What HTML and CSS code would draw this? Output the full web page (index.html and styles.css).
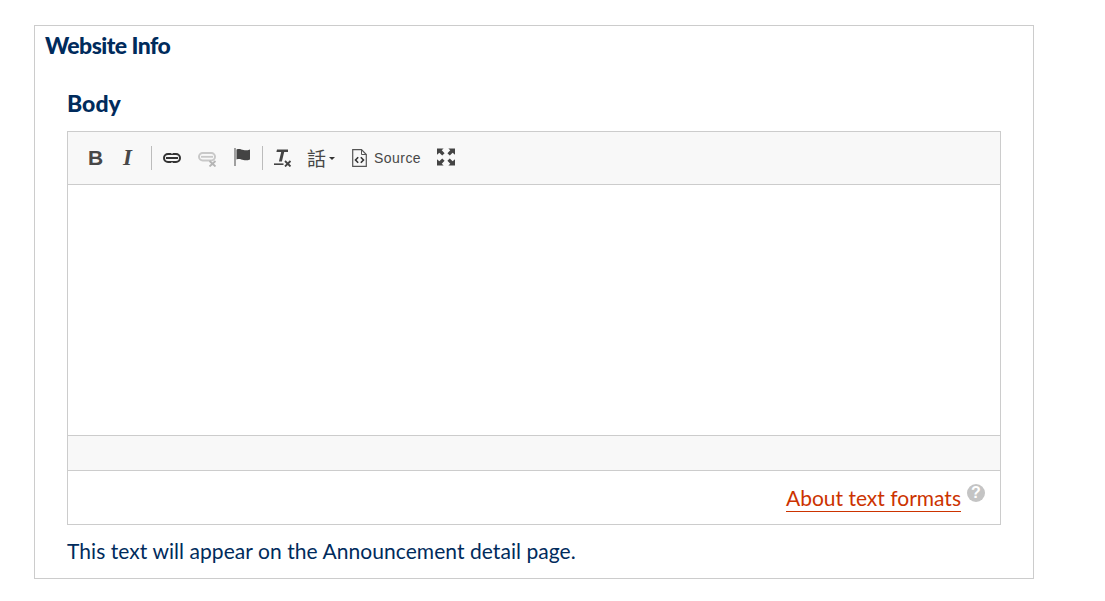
FILE: index.html
```html
<!DOCTYPE html>
<html lang="en">
<head>
  <meta charset="UTF-8">
  <title>Website Info</title>
  <link rel="stylesheet" href="styles.css">
</head>
<body>
  <fieldset class="group">
    <h2 class="group-title">Website Info</h2>

    <div class="field">
      <h3 class="field-label">Body</h3>

      <div class="editor">
        <div class="toolbar">
          <span class="tool tool-bold">B</span>
          <span class="tool tool-italic">I</span>
          <span class="sep"></span>

          <svg class="icon icon-link" width="18" height="10" viewBox="0 0 18 10">
            <rect x="1" y="1" width="16" height="8" rx="4" fill="none" stroke="#333" stroke-width="2"/>
            <path d="M3 5h12" stroke="#333" stroke-width="2"/>
            <path d="M9 0v1M9 9v1" stroke="#f8f8f8" stroke-width="1"/>
          </svg>
          <svg class="icon icon-unlink" width="19" height="15" viewBox="0 0 19 15">
            <rect x="1" y="1" width="16" height="7.500" rx="3.700" fill="none" stroke="#c8c8c8" stroke-width="2"/>
            <path d="M3 4.800h12" stroke="#c8c8c8" stroke-width="1.800"/>
            <path d="M11.500 9l6 5.500M17.500 9l-6 5.500" stroke="#b5b5b5" stroke-width="1.800"/>
          </svg>
          <svg class="icon icon-flag" width="18" height="18" viewBox="0 0 18 18">
            <path d="M1 0v18" stroke="#666" stroke-width="1.200"/>
            <path d="M2.500 1.500c3-1.200 4.500 0 7 .6 2.300.5 4 .3 6.500-.6v10c-2.500.9-4.200 1.100-6.500.6-2.500-.6-4-1.800-7-.6z" fill="#444"/>
          </svg>
          <span class="sep sep-second"></span>

          <svg class="icon icon-clear" width="18" height="19" viewBox="0 0 18 19">
            <path d="M3 1.500h11v2.600h-3.800l-2.300 9.400h-3l2.300-9.400h-4.800z" fill="#444"/>
            <path d="M0 16.200h9.500" stroke="#444" stroke-width="1.600"/>
            <path d="M11 13l5.500 5.500M16.500 13l-5.500 5.500" stroke="#444" stroke-width="1.800"/>
          </svg>
          <span class="tool tool-lang">話</span>
          <span class="caret"></span>
          <svg class="icon icon-source" width="15" height="18" viewBox="0 0 15 18">
            <path d="M.7 .7h8.800l4.800 4.800v11.800h-13.600z" fill="none" stroke="#555" stroke-width="1.200"/>
            <path d="M9.500 .7v4.800h4.800" fill="none" stroke="#555" stroke-width="1"/>
            <path d="M6.200 8.200l-2.700 2.800 2.700 2.800M8.800 8.200l2.700 2.800-2.700 2.800" fill="none" stroke="#333" stroke-width="1.600"/>
          </svg>
          <span class="tool-text">Source</span>
          <svg class="icon icon-max" width="18" height="18" viewBox="0 0 19 18">
            <path d="M0 0h7l-2 2 3 3-2.500 2.500-3-3-2.500 2zM19 0h-7l2 2-3 3 2.500 2.500 3-3 2.500 2zM0 18h7l-2-2 3-3-2.500-2.500-3 3-2.500-2zM19 18h-7l2-2-3-3 2.500-2.500 3 3 2.500-2z" fill="#444"/>
          </svg>
        </div>

        <div class="editor-body"></div>
        <div class="editor-bottom"></div>

        <div class="format-row">
          <a class="format-link" href="#">About text formats</a>
          <span class="help">?</span>
        </div>
      </div>

      <p class="description">This text will appear on the Announcement detail page.</p>
    </div>
  </fieldset>
</body>
</html>
```

FILE: styles.css
```css
* {
  box-sizing: border-box;
}

body {
  margin: 0;
  padding: 25px 71px 0 34px;
  background-color: white;
  font-family: "Lato", "Liberation Sans", sans-serif;
  color: #002b5c;
}

.group {
  margin: 0;
  padding: 0;
  min-width: 0;
  height: 554px;
  border: 1px solid #cccccc;
}

.group-title {
  margin: 0;
  padding: 7px 0 0 10px;
  height: 60px;
  font-family: "Lato", "Liberation Sans", sans-serif;
  font-size: 23px;
  line-height: 24px;
  font-weight: 900;
  letter-spacing: -0.55px;
}

.field {
  padding: 0 32px;
}

.field-label {
  margin: 0 0 12px 0;
  height: 33px;
  padding-top: 3px;
  font-family: "Lato", "Liberation Sans", sans-serif;
  font-size: 23px;
  line-height: 28px;
  font-weight: 900;
}

.editor {
  border: 1px solid #cccccc;
}

/* Toolbar */
.toolbar {
  display: flex;
  align-items: center;
  height: 53px;
  padding-left: 20px;
  background-color: #f8f8f8;
  border-bottom: 1px solid #cccccc;
}

.tool {
  color: #474747;
}

.icon {
  display: block;
  flex: none;
}

.tool-bold {
  width: 15px;
  font-family: "Liberation Sans", sans-serif;
  font-size: 21px;
  font-weight: 700;
}

.tool-italic {
  width: 14px;
  margin-left: 20px;
  font-family: "Liberation Serif", serif;
  font-size: 23px;
  font-weight: 700;
  font-style: italic;
}

.sep {
  width: 1px;
  height: 24px;
  margin-left: 14px;
  background-color: #bcbcbc;
}

.sep-second {
  margin-left: 10px;
}

.icon-link {
  margin-left: 11px;
}

.icon-unlink {
  margin: 3px 0 0 17px;
}

.icon-flag {
  margin: -3px 0 0 17px;
}

.icon-clear {
  margin: -2px 0 0 11px;
}

.tool-lang {
  margin-left: 15px;
  font-family: "Noto Sans CJK TC", sans-serif;
  font-size: 19px;
  line-height: 24px;
}

.caret {
  width: 0;
  height: 0;
  margin-left: 3px;
  border-top: 3px solid #333;
  border-left: 3px solid transparent;
  border-right: 3px solid transparent;
}

.icon-source {
  margin-left: 17px;
}

.tool-text {
  margin-left: 7px;
  font-family: "Liberation Sans", sans-serif;
  font-size: 14px;
  color: #474747;
  letter-spacing: 0.45px;
}

.icon-max {
  margin: -2px 0 0 16px;
}

.editor-body {
  height: 250px;
  background-color: white;
}

.editor-bottom {
  height: 36px;
  background-color: #f8f8f8;
  border-top: 1px solid #cccccc;
  border-bottom: 1px solid #cccccc;
}

/* Text format row */
.format-row {
  display: flex;
  justify-content: flex-end;
  height: 53px;
  padding: 13px 15px 0 0;
}

.format-link {
  height: 28px;
  font-size: 21px;
  line-height: 27px;
  color: #cc3300;
  text-decoration: none;
  border-bottom: 1px solid #cc3300;
}

.help {
  width: 18px;
  height: 18px;
  margin: 0 0 0 6px;
  border-radius: 50%;
  background-color: #c4c4c4;
  color: white;
  font-family: "Liberation Sans", sans-serif;
  font-size: 16px;
  line-height: 18px;
  font-weight: 700;
  text-align: center;
}

.description {
  margin: 13px 0 0 0;
  font-size: 21px;
  line-height: 26px;
  letter-spacing: 0.06px;
}
```
